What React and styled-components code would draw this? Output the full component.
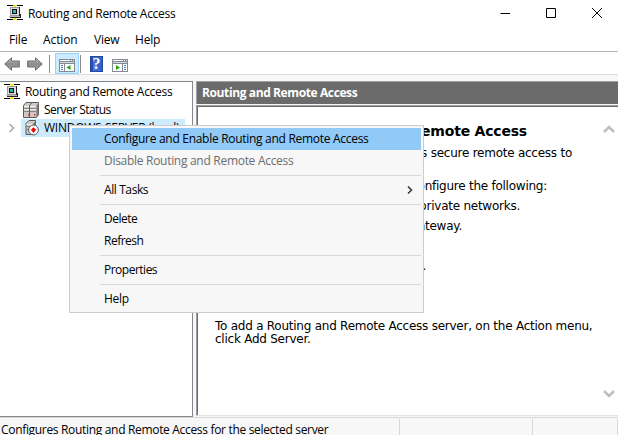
import React from "react";
import styled, { createGlobalStyle } from "styled-components";

const Global = createGlobalStyle`
  * { box-sizing: border-box; }
  html, body { margin: 0; padding: 0; background: #fff; overflow: hidden; }
  svg { display: block; flex: none; }
`;

const ui = `"Open Sans", "Noto Sans", sans-serif`;

const Window = styled.div`
  position: relative;
  width: 618px;
  height: 435px;
  display: flex;
  flex-direction: column;
  background: #f7f7f7;
  color: #000;
  font: 12px/16px ${ui};
  overflow: hidden;
`;

const Label = styled.span`
  white-space: nowrap;
  letter-spacing: ${(p) => p.$ls ?? -0.29}px;
  font-weight: ${(p) => (p.$bold ? 700 : 400)};
`;

const TitleBar = styled.header`
  height: 28px;
  flex: none;
  display: flex;
  align-items: flex-start;
  background: #fff;
  padding: 5px 16px 0 7px;
`;

const TitleText = styled.div`
  flex: 1;
  padding: 1px 0 0 4px;
`;

const Controls = styled.div`
  display: flex;
  gap: 36px;
  padding-top: 3px;
`;

const MenuBar = styled.nav`
  height: 23px;
  flex: none;
  display: flex;
  background: #fff;
  padding: 4px 0 0 9px;
`;

const MenuEntry = styled.div`
  width: ${(p) => p.$w}px;
`;

const Toolbar = styled.div`
  height: 24px;
  flex: none;
  display: flex;
  align-items: flex-start;
  background: #fff;
  border-top: 1px solid #b2b6ba;
  border-bottom: 1px solid #dedede;
  padding: 1px 0 0 4px;
`;

const ToolButton = styled.div`
  width: ${(p) => p.$w}px;
  height: 21px;
  flex: none;
  display: flex;
  align-items: center;
  justify-content: center;
  padding-top: ${(p) => p.$drop || 0}px;
  background: ${(p) => (p.$on ? "#cdebff" : "transparent")};
  border: 1px solid ${(p) => (p.$on ? "#99d1ff" : "transparent")};
`;

const ToolDivider = styled.div`
  width: 1px;
  height: 18px;
  margin: 2px ${(p) => p.$r}px 0 ${(p) => p.$l}px;
  background: #8c8c8c;
`;

const Body = styled.main`
  height: 342px;
  flex: none;
  display: flex;
  padding-top: 6px;
  gap: 3px;
`;

const Tree = styled.aside`
  width: 193px;
  height: 336px;
  background: #fff;
  border: solid #828790;
  border-width: 1px 1px 1px 0;
  padding-top: 1px;
`;

const TreeRow = styled.div`
  height: 18px;
  display: flex;
  align-items: center;
  padding-left: ${(p) => p.$indent}px;
`;

const TreeLabel = styled.div`
  height: 18px;
  line-height: 18px;
  padding-left: ${(p) => p.$gap}px;
`;

const Selected = styled.div`
  width: 164px;
  height: 18px;
  margin-left: 5px;
  padding-left: 4px;
  display: flex;
  align-items: center;
  background: #cdebff;
`;

const Pane = styled.section`
  flex: 1;
  display: flex;
  flex-direction: column;
`;

const PaneTitle = styled.h1`
  height: 23px;
  flex: none;
  margin: 0;
  padding: 2px 0 0 5px;
  color: #fff;
  background: #6b6b6b;
  border: solid #a0a0a0;
  border-width: 1px 0 0 1px;
  font: 12px/18px ${ui};
`;

const Document = styled.article`
  height: 311px;
  margin-top: 1px;
  border-top: 1px solid #a0a0a0;
  border-left: 1px solid #a0a0a0;
  border-bottom: 1px solid #e3e3e3;
  box-shadow: inset 1px 1px #696969;
  background: #fff;
  display: flex;
  justify-content: space-between;
  font: 12px/13px "DejaVu Sans", sans-serif;
`;

const Prose = styled.div`
  padding: 17px 0 0 18px;
`;

const Heading = styled.h2`
  margin: 0 0 7px;
  width: 312px;
  display: flex;
  justify-content: flex-end;
  font-size: 14px;
  line-height: 17px;
`;

const Line = styled.p`
  margin: 0 0 ${(p) => p.$after || 0}px;
  width: ${(p) => p.$w}px;
  display: flex;
  justify-content: ${(p) => (p.$start ? "flex-start" : "flex-end")};
`;

const ScrollRail = styled.div`
  width: 15px;
  padding: 18px 0 16px;
  display: flex;
  flex-direction: column;
  justify-content: space-between;
`;

const StatusBar = styled.footer`
  height: 18px;
  flex: none;
  display: flex;
  border-top: 1px solid #d7d7d7;
`;

const StatusCell = styled.div`
  width: ${(p) => p.$w}px;
  height: 16px;
  margin-top: 1px;
  padding: 3px 0 0 1px;
  border-right: 1px solid #d7d7d7;
`;

const ContextMenu = styled.div`
  position: absolute;
  left: 69px;
  top: 125px;
  width: 355px;
  height: 188px;
  padding: 2px;
  background: #f7f7f7;
  border: 1px solid #ccc;
`;

const MenuItem = styled.div`
  height: 22px;
  width: 349px;
  padding: 0 8px 0 32px;
  display: flex;
  align-items: center;
  justify-content: space-between;
  color: ${(p) => (p.$disabled ? "#6d6d6d" : "#000")};
  background: ${(p) => (p.$active ? "#91c9f7" : "transparent")};
`;

const Separator = styled.div`
  height: 1px;
  margin: 3px 0 3px 28px;
  width: 321px;
  background: #d7d7d7;
`;

const NetworkIcon = () => (
  <svg width="17" height="16" shapeRendering="crispEdges">
    <path d="M0 0h16v1H0zM0 14h16v1H0z" fill="#000" />
    <path d="M6 0h4v1H6zM7 1h2v1H7zM7 13h2v1H7zM6 14h4v1H6z" fill="#f2e600" />
    <path d="M3 2h10v9H3z" fill="#9a9a9a" />
    <path d="M4 3h8v7H4z" fill="#dcdcdc" />
    <path d="M5 4h5v5H5z" fill="#111" />
    <path d="M6 5h3v3H6z" fill="#28b5b0" />
    <path d="M3 12h11v1H3zM12 2h1v9h-1zM13 9h1v3h-1z" fill="#222" />
    <path d="M2 11h11v1H2z" fill="#b9b9b9" />
  </svg>
);

const ServersIcon = () => (
  <svg width="17" height="16">
    {[0, 6].map((x) => (
      <g key={x} transform={`translate(${x} 0)`}>
        <path d="M.5 3.500L3 .5h6.500v12L7.500 15.500h-7z" fill="#cdcac6" stroke="#5a5a5a" />
        <path d="M7.500 3.500v12L9.500 13V1z" fill="#777" />
        <path d="M1 6.500h6M1 9.500h6" stroke="#858585" />
        <path d="M1 4.500h6M1 7.500h6" stroke="#f1efec" />
        <path d="M5 12h1.500v1.500H5z" fill="#e02020" />
      </g>
    ))}
  </svg>
);

const StoppedServerIcon = () => (
  <svg width="15" height="16">
    <path d="M1 3.500L4 .5h6.500v11L8 14.500H1z" fill="#cdcac6" stroke="#5a5a5a" />
    <path d="M8 4v10l2.500-3V1z" fill="#777" />
    <path d="M1.500 6.500h6M1.500 9.500h5" stroke="#858585" />
    <path d="M1.500 4.500h6" stroke="#f1efec" />
    <circle cx="8.500" cy="10" r="4.900" fill="#fff" stroke="#4a4a4a" strokeWidth=".9" />
    <path d="M7.500 8h2v1.500H11L8.500 12.500 6 9.500h1.500z" fill="#f00000" stroke="#f00000" strokeWidth=".6" />
  </svg>
);

const ArrowIcon = ({ right }) => (
  <svg width="16" height="14">
    <defs>
      <linearGradient id="arrow" x2="0" y2="1">
        <stop offset="0" stopColor="#c4c4c4" />
        <stop offset=".5" stopColor="#8c8c8c" />
        <stop offset="1" stopColor="#a5a5a5" />
      </linearGradient>
    </defs>
    <path
      transform={right ? "translate(16 0) scale(-1 1)" : undefined}
      d="M.7 7L7.500.8V4h7.800v6H7.500v3.200z"
      fill="url(#arrow)"
      stroke="#6d6d6d"
    />
  </svg>
);

const PanelIcon = ({ right }) => (
  <svg width="16" height="13" shapeRendering="crispEdges">
    <path d="M0 0h16v13H0z" fill="#848a92" />
    <path d="M1 1h10v1H1zM12 1h1v1h-1zM14 1h1v1h-1z" fill="#fff" />
    <path d="M1 3h14v1H1z" fill="#d4dae2" />
    <path d="M1 5h4v7H1zM6 5h9v7H6z" fill="#fff" transform={right ? "translate(16 0) scale(-1 1)" : undefined} />
    <path d={right ? "M12 6h2v1h-2zM12 8h2v1h-2zM12 10h2v1h-2z" : "M2 6h2v1H2zM2 8h2v1H2zM2 10h2v1H2z"} fill="#4d7db4" />
    <path d={right ? "M4 6l4 2.500L4 11z" : "M11.500 6v5L7.500 8.500z"} fill="#25a914" shapeRendering="auto" />
  </svg>
);

const HelpGlyph = styled.div`
  width: 13px;
  height: 16px;
  border: 1px solid #2448a0;
  background: linear-gradient(90deg, #274cae 2px, #4a78e0 2px, #315bc8);
  color: #fff;
  font: 700 16px/14px "Liberation Serif", serif;
  text-align: center;
`;

const Chevron = ({ d, w, h, color, stroke = 1.5 }) => (
  <svg width={w} height={h}>
    <path d={d} fill="none" stroke={color} strokeWidth={stroke} />
  </svg>
);

const PROSE = -0.245;

export default function App() {
  return (
    <Window>
      <Global />
      <TitleBar>
        <NetworkIcon />
        <TitleText><Label>Routing and Remote Access</Label></TitleText>
        <Controls>
          <Chevron w={10} h={10} d="M.5 5.500h9.500" color="#000" stroke={1} />
          <Chevron w={10} h={10} d="M.5.5h9v9h-9z" color="#000" stroke={1} />
          <Chevron w={10} h={10} d="M0 0l10 10M10 0L0 10" color="#000" stroke={1} />
        </Controls>
      </TitleBar>
      <MenuBar>
        <MenuEntry $w={34}><Label $ls={-0.2}>File</Label></MenuEntry>
        <MenuEntry $w={51}><Label $ls={-0.1}>Action</Label></MenuEntry>
        <MenuEntry $w={41}><Label $ls={-0.2}>View</Label></MenuEntry>
        <MenuEntry $w={34}><Label $ls={-0.2}>Help</Label></MenuEntry>
      </MenuBar>
      <Toolbar>
        <ToolButton $w={16}><ArrowIcon /></ToolButton>
        <ToolButton $w={30}><ArrowIcon right /></ToolButton>
        <ToolDivider $l={-1} $r={5} />
        <ToolButton $w={24} $on $drop={3}><PanelIcon /></ToolButton>
        <ToolDivider $l={1} $r={4} />
        <ToolButton $w={23}><HelpGlyph>?</HelpGlyph></ToolButton>
        <ToolButton $w={24} $drop={3}><PanelIcon right /></ToolButton>
      </Toolbar>
      <Body>
        <Tree>
          <TreeRow $indent={4}>
            <NetworkIcon />
            <TreeLabel $gap={4}><Label>Routing and Remote Access</Label></TreeLabel>
          </TreeRow>
          <TreeRow $indent={23}>
            <ServersIcon />
            <TreeLabel $gap={4}><Label $ls={-0.55}>Server Status</Label></TreeLabel>
          </TreeRow>
          <TreeRow $indent={8}>
            <Chevron w={8} h={10} d="M1.500 1L5.500 5l-4 4" color="#a6a6a6" />
            <Selected>
              <StoppedServerIcon />
              <TreeLabel $gap={4}><Label $ls={-0.25}>WINDOWS-SERVER (local)</Label></TreeLabel>
            </Selected>
          </TreeRow>
        </Tree>
        <Pane>
          <PaneTitle><Label $bold $ls={-0.39}>Routing and Remote Access</Label></PaneTitle>
          <Document>
            <Prose>
              <Heading><Label $bold $ls={-0.2}>Welcome to Routing and Remote Access</Label></Heading>
              <Line $w={357}><Label $ls={PROSE}>Routing and Remote Access provides secure remote access to</Label></Line>
              <Line $w={110} $after={7}><Label $ls={PROSE}>private networks.</Label></Line>
              <Line $w={332} $after={7}><Label $ls={PROSE}>Use Routing and Remote Access to configure the following:</Label></Line>
              <Line $w={305} $after={7}><Label $ls={PROSE}>A secure connection between two private networks.</Label></Line>
              <Line $w={247} $after={7}><Label $ls={PROSE}>A Virtual Private Network (VPN) gateway.</Label></Line>
              <Line $w={200} $after={7}><Label $ls={PROSE}>A dial-up remote access server.</Label></Line>
              <Line $w={211} $after={7}><Label $ls={PROSE}>Network address translation (NAT).</Label></Line>
              <Line $w={120} $after={27}><Label $ls={PROSE}>A basic firewall.</Label></Line>
              <Line $w={378} $start><Label $ls={PROSE}>To add a Routing and Remote Access server, on the Action menu,</Label></Line>
              <Line $w={378} $start><Label $ls={PROSE}>click Add Server.</Label></Line>
            </Prose>
            <ScrollRail>
              <Chevron w={12} h={10} d="M1 8l5-5 5 5" color="#bfbfbf" stroke={2.500} />
              <Chevron w={12} h={10} d="M1 2l5 5 5-5" color="#bfbfbf" stroke={2.500} />
            </ScrollRail>
          </Document>
        </Pane>
      </Body>
      <StatusBar>
        <StatusCell $w={400}><Label $ls={-0.32}>Configures Routing and Remote Access for the selected server</Label></StatusCell>
        <StatusCell $w={133} />
        <StatusCell $w={85} />
      </StatusBar>
      <ContextMenu>
        <MenuItem $active><Label>Configure and Enable Routing and Remote Access</Label></MenuItem>
        <MenuItem $disabled><Label>Disable Routing and Remote Access</Label></MenuItem>
        <Separator />
        <MenuItem><Label $ls={-0.4}>All Tasks</Label><Chevron w={6} h={8} d="M1 .5L4.500 4 1 7.500" color="#333" /></MenuItem>
        <Separator />
        <MenuItem><Label $ls={-0.5}>Delete</Label></MenuItem>
        <MenuItem><Label $ls={-0.5}>Refresh</Label></MenuItem>
        <Separator />
        <MenuItem><Label $ls={-0.5}>Properties</Label></MenuItem>
        <Separator />
        <MenuItem><Label>Help</Label></MenuItem>
      </ContextMenu>
    </Window>
  );
}
